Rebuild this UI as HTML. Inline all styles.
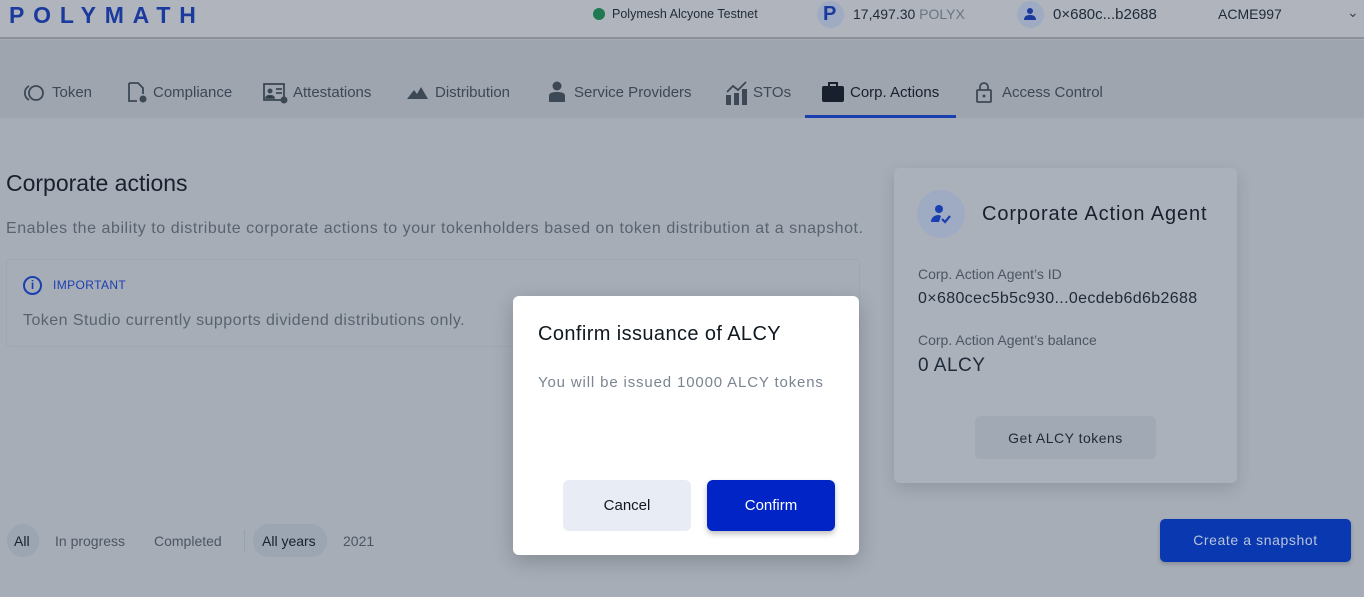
<!DOCTYPE html>
<html><head><style>
*{box-sizing:border-box;margin:0;padding:0}
body{width:1364px;height:597px;overflow:hidden;background:#a6adb7;font-family:"Liberation Sans",sans-serif;position:relative;color:#1b2633}
.hdr{position:absolute;left:0;top:0;width:1364px;height:39px;background:#b0b5bd;border-bottom:2px solid #8a919a}
.logo{position:absolute;left:9px;top:2px;font-size:23px;font-weight:bold;letter-spacing:8.8px;color:#1a3a9e}
.t{position:absolute;font-size:14px;color:#1f2a38;white-space:nowrap}
.nav{position:absolute;left:0;top:40px;width:1364px;height:78px;background:#9ea5af}
.tab{position:absolute;top:83px;font-size:15px;color:#3d4856;white-space:nowrap}
.ic{position:absolute}
.c{position:absolute}
.av{position:absolute;border-radius:50%;background:#9eabc3}
</style></head><body>
<div class="hdr">
<div class="logo">POLYMATH</div>
<div class="c" style="left:593px;top:8px;width:12px;height:12px;border-radius:50%;background:#1f7a52"></div>
<div class="t" style="left:612px;top:7px;font-size:12.5px">Polymesh Alcyone Testnet</div>
<div class="av" style="left:817px;top:1px;width:27px;height:27px"></div>
<div class="t" style="left:823px;top:3px;font-size:20px;font-weight:bold;color:#1a3a9e">P</div>
<div class="t" style="left:853px;top:6px">17,497.30 <span style="color:#6a7482">POLYX</span></div>
<div class="av" style="left:1017px;top:1px;width:27px;height:27px"></div>
<svg class="c" style="left:1023px;top:7px" width="14" height="14" viewBox="0 0 14 14"><circle cx="7" cy="4" r="3" fill="#1a3a9e"/><path d="M1 13c0-4 3-5 6-5s6 1 6 5z" fill="#1a3a9e"/></svg>
<div class="t" style="left:1053px;top:6px;font-size:15px">0×680c...b2688</div>
<div class="t" style="left:1218px;top:6px">ACME997</div>
<div class="t" style="left:1347px;top:4px;color:#444">⌄</div>
</div>
<div class="nav"></div>
<svg class="ic" style="left:22px;top:84px" width="24" height="18" viewBox="0 0 24 18"><path d="M7 2A8 8 0 0 0 7 16" stroke="#3d4856" stroke-width="1.8" fill="none"/><circle cx="14" cy="9" r="7" stroke="#3d4856" stroke-width="1.8" fill="none"/></svg>
<div class="tab" style="left:52px;top:84px">Token</div>
<svg class="ic" style="left:127px;top:81px" width="22" height="24" viewBox="0 0 22 24"><path d="M2 2h9l5 5v6M2 2v18h8" stroke="#3d4856" stroke-width="1.8" fill="none"/><circle cx="16" cy="18" r="3.5" fill="#3d4856"/></svg>
<div class="tab" style="left:153px;top:84px">Compliance</div>
<svg class="ic" style="left:263px;top:83px" width="26" height="22" viewBox="0 0 26 22"><rect x="1" y="1" width="20" height="16" stroke="#3d4856" stroke-width="1.8" fill="none"/><circle cx="7" cy="8" r="2.5" fill="#3d4856"/><path d="M3 15c0-3 8-3 8 0zM13 6h6M13 10h6" stroke="#3d4856" stroke-width="1.8"/><circle cx="21" cy="17" r="3.5" fill="#3d4856"/></svg>
<div class="tab" style="left:293px;top:84px">Attestations</div>
<svg class="ic" style="left:407px;top:85px" width="22" height="16" viewBox="0 0 22 16"><path d="M0 14L7 5l3 4 4-7 7 12z" fill="#3d4856"/></svg>
<div class="tab" style="left:435px;top:84px">Distribution</div>
<svg class="ic" style="left:548px;top:81px" width="18" height="22" viewBox="0 0 18 22"><circle cx="9" cy="5" r="4.5" fill="#3d4856"/><path d="M1 21v-6c0-3 3-4 8-4s8 1 8 4v6z" fill="#3d4856"/></svg>
<div class="tab" style="left:574px;top:84px">Service Providers</div>
<svg class="ic" style="left:725px;top:80px" width="24" height="25" viewBox="0 0 24 25"><path d="M2 12l6-6 5 4 8-8" stroke="#3d4856" stroke-width="1.8" fill="none"/><rect x="1" y="15" width="5" height="10" fill="#3d4856"/><rect x="9" y="13" width="5" height="12" fill="#3d4856"/><rect x="17" y="9" width="5" height="16" fill="#3d4856"/></svg>
<div class="tab" style="left:753px;top:84px">STOs</div>
<svg class="ic" style="left:822px;top:82px" width="22" height="20" viewBox="0 0 22 20"><path d="M7 4V1h8v3" stroke="#17202c" stroke-width="2" fill="none"/><rect x="0" y="4" width="22" height="16" rx="2" fill="#17202c"/></svg>
<div class="tab" style="left:850px;top:84px;color:#17202c">Corp. Actions</div>
<div class="c" style="left:805px;top:115px;width:151px;height:3px;background:#1a3fb0"></div>
<svg class="ic" style="left:976px;top:81px" width="16" height="22" viewBox="0 0 16 22"><path d="M4 9V6a4 4 0 0 1 8 0v3" stroke="#3d4856" stroke-width="1.8" fill="none"/><rect x="1" y="9" width="14" height="12" rx="1" stroke="#3d4856" stroke-width="1.8" fill="none"/><circle cx="8" cy="15" r="1.5" fill="#3d4856"/></svg>
<div class="tab" style="left:1002px;top:84px">Access Control</div>

<div class="t" style="left:6px;top:170px;font-size:23px;color:#17202c">Corporate actions</div>
<div class="t" style="left:6px;top:220px;font-size:16px;letter-spacing:.55px;color:#59636f">Enables the ability to distribute corporate actions to your tokenholders based on token distribution at a snapshot.</div>
<div class="c" style="left:6px;top:259px;width:854px;height:88px;border:1px solid #a0a7b1;border-radius:4px"></div>
<div class="c" style="left:23px;top:276px;width:19px;height:19px;border:2px solid #1a3fb0;border-radius:50%;color:#1a3fb0;font-size:12px;text-align:center;line-height:15px;font-weight:bold">i</div>
<div class="t" style="left:53px;top:278px;font-size:12px;letter-spacing:.4px;color:#1a3fb0">IMPORTANT</div>
<div class="t" style="left:23px;top:312px;font-size:16px;letter-spacing:.45px;color:#59636f">Token Studio currently supports dividend distributions only.</div>

<div class="c" style="left:7px;top:524px;width:32px;height:33px;border-radius:16px;background:#9ca5b2"></div>
<div class="t" style="left:14px;top:533px;color:#17202c">All</div>
<div class="t" style="left:55px;top:533px;color:#4c5663">In progress</div>
<div class="t" style="left:154px;top:533px;color:#4c5663">Completed</div>
<div class="c" style="left:244px;top:530px;width:1px;height:22px;background:#98a0aa"></div>
<div class="c" style="left:253px;top:524px;width:74px;height:33px;border-radius:16px;background:#9ca5b2"></div>
<div class="t" style="left:262px;top:533px;color:#17202c">All years</div>
<div class="t" style="left:343px;top:533px;color:#4c5663">2021</div>

<div class="c" style="left:894px;top:168px;width:343px;height:315px;background:#abb1ba;border-radius:6px;box-shadow:0 6px 16px rgba(0,0,0,.12)"></div>
<div class="av" style="left:917px;top:190px;width:48px;height:48px"></div>
<svg class="c" style="left:929px;top:202px" width="24" height="24" viewBox="0 0 24 24"><circle cx="10" cy="7" r="4" fill="#1a3fb0"/><path d="M2 20c0-5 4-7 8-7l2 1-2 6z" fill="#1a3fb0"/><path d="M13 17l3 3 5-6" stroke="#1a3fb0" stroke-width="2.2" fill="none"/></svg>
<div class="t" style="left:982px;top:203px;font-size:20px;letter-spacing:.9px;color:#17202c">Corporate Action Agent</div>
<div class="t" style="left:918px;top:266px;color:#4c5663">Corp. Action Agent’s ID</div>
<div class="t" style="left:918px;top:290px;font-size:16px;letter-spacing:.35px">0×680cec5b5c930...0ecdeb6d6b2688</div>
<div class="t" style="left:918px;top:332px;color:#4c5663">Corp. Action Agent’s balance</div>
<div class="t" style="left:918px;top:355px;font-size:19px;letter-spacing:.5px">0 ALCY</div>
<div class="c" style="left:975px;top:416px;width:181px;height:43px;border-radius:5px;background:#a1a9b4"></div>
<div class="t" style="left:975px;top:430px;width:181px;text-align:center;letter-spacing:.5px">Get ALCY tokens</div>
<div class="c" style="left:1160px;top:519px;width:191px;height:43px;border-radius:5px;background:#0a38b0;box-shadow:0 2px 4px rgba(0,0,0,.2)"></div>
<div class="t" style="left:1160px;top:532px;width:191px;text-align:center;color:#b9c4dc;letter-spacing:.6px">Create a snapshot</div>

<div class="c" style="left:513px;top:296px;width:346px;height:259px;background:#fff;border-radius:6px;box-shadow:0 6px 20px rgba(0,0,0,.2)"></div>
<div class="t" style="left:538px;top:323px;font-size:20px;letter-spacing:.4px;color:#101820">Confirm issuance of ALCY</div>
<div class="t" style="left:538px;top:374px;font-size:15px;letter-spacing:.85px;color:#7b8592">You will be issued 10000 ALCY tokens</div>
<div class="c" style="left:563px;top:480px;width:128px;height:51px;border-radius:6px;background:#e8ecf4"></div>
<div class="t" style="left:563px;top:497px;width:128px;text-align:center;font-size:15px;color:#101820">Cancel</div>
<div class="c" style="left:707px;top:480px;width:128px;height:51px;border-radius:6px;background:#0124c6;box-shadow:0 3px 6px rgba(0,0,0,.25)"></div>
<div class="t" style="left:707px;top:497px;width:128px;text-align:center;font-size:15px;color:#fff">Confirm</div>
</body></html>
